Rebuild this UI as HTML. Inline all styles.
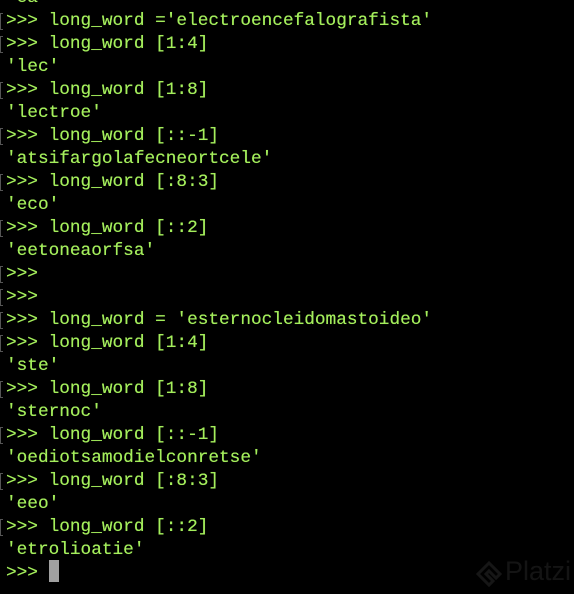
<!DOCTYPE html>
<html><head><meta charset="utf-8"><style>
html,body{margin:0;padding:0;background:#000;width:574px;height:592px;overflow:hidden;}
.t{position:absolute;left:0;top:2px;width:574px;height:592px;}
.l{position:absolute;left:6px;height:23px;line-height:23px;font-family:"Liberation Mono",monospace;font-size:17.75px;color:#a4ee5c;white-space:pre;text-shadow:0 0 0.4px #a4ee5c;}
.b{position:absolute;left:0;width:3px;height:17px;border:1px solid #555;border-right:none;box-sizing:border-box;}
.cur{position:absolute;left:49px;top:558px;width:10px;height:22px;background:#a0a0a0;}
.wm{position:absolute;left:505px;top:554px;font-family:"Liberation Sans",sans-serif;font-size:27px;color:#141414;}
</style></head><body><div class="t">
<div class="l" style="top:-15px">'ea'</div>
<div class="l" style="top:8px">&gt;&gt;&gt; long_word ='electroencefalografista'</div>
<div class="l" style="top:31px">&gt;&gt;&gt; long_word [1:4]</div>
<div class="l" style="top:54px">'lec'</div>
<div class="l" style="top:77px">&gt;&gt;&gt; long_word [1:8]</div>
<div class="l" style="top:100px">'lectroe'</div>
<div class="l" style="top:123px">&gt;&gt;&gt; long_word [::-1]</div>
<div class="l" style="top:146px">'atsifargolafecneortcele'</div>
<div class="l" style="top:169px">&gt;&gt;&gt; long_word [:8:3]</div>
<div class="l" style="top:192px">'eco'</div>
<div class="l" style="top:215px">&gt;&gt;&gt; long_word [::2]</div>
<div class="l" style="top:238px">'eetoneaorfsa'</div>
<div class="l" style="top:261px">&gt;&gt;&gt;</div>
<div class="l" style="top:284px">&gt;&gt;&gt;</div>
<div class="l" style="top:307px">&gt;&gt;&gt; long_word = 'esternocleidomastoideo'</div>
<div class="l" style="top:330px">&gt;&gt;&gt; long_word [1:4]</div>
<div class="l" style="top:353px">'ste'</div>
<div class="l" style="top:376px">&gt;&gt;&gt; long_word [1:8]</div>
<div class="l" style="top:399px">'sternoc'</div>
<div class="l" style="top:422px">&gt;&gt;&gt; long_word [::-1]</div>
<div class="l" style="top:445px">'oediotsamodielconretse'</div>
<div class="l" style="top:468px">&gt;&gt;&gt; long_word [:8:3]</div>
<div class="l" style="top:491px">'eeo'</div>
<div class="l" style="top:514px">&gt;&gt;&gt; long_word [::2]</div>
<div class="l" style="top:537px">'etrolioatie'</div>
<div class="l" style="top:560px">&gt;&gt;&gt;</div>
<div class="b" style="top:11px"></div><div class="b" style="top:34px"></div><div class="b" style="top:80px"></div>
<div class="b" style="top:126px"></div><div class="b" style="top:172px"></div><div class="b" style="top:218px"></div>
<div class="b" style="top:264px"></div><div class="b" style="top:287px"></div><div class="b" style="top:310px"></div>
<div class="b" style="top:333px"></div><div class="b" style="top:379px"></div><div class="b" style="top:425px"></div>
<div class="b" style="top:471px"></div><div class="b" style="top:517px"></div>
<div class="cur"></div>
<svg style="position:absolute;left:474px;top:558px" width="30" height="30" viewBox="0 0 30 30"><path d="M15 3 L4 14 L15 25 L19 21 L12 14 L15 11 L22 18 L26 14 Z" fill="none" stroke="#161616" stroke-width="3"/></svg>
<div class="wm">Platzi</div>
</div></body></html>
